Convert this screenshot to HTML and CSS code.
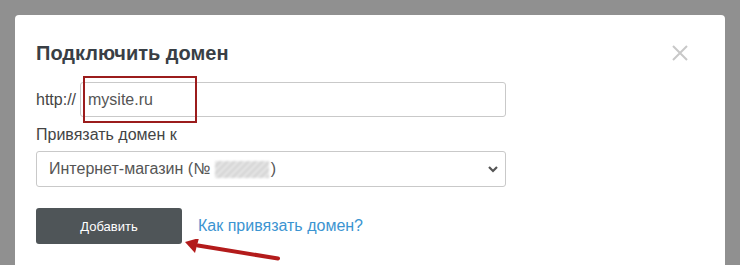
FILE: index.html
```html
<!DOCTYPE html>
<html lang="ru">
<head>
<meta charset="utf-8">
<link rel="stylesheet" href="styles.css">
</head>
<body>
<div class="modal">
  <div class="head">
    <h2 class="title">Подключить домен</h2>
    <span class="close" aria-label="close">
      <svg width="16" height="16" viewBox="0 0 16 16"><path d="M1 1L15 15M15 1L1 15" stroke="#c8c8c8" stroke-width="2" fill="none"/></svg>
    </span>
  </div>
  <div class="row-url">
    <span class="prefix">http://</span>
    <div class="input">mysite.ru<span class="highlight"></span></div>
  </div>
  <div class="label">Привязать домен к</div>
  <div class="select">
    <span class="sel-text">Интернет-магазин (№ <span class="blur"></span>)</span>
    <svg class="chev" width="10" height="7" viewBox="0 0 10 7"><path d="M1 1L5 5L9 1" stroke="#555" stroke-width="2.2" fill="none"/></svg>
  </div>
  <div class="actions">
    <button class="btn">Добавить</button>
    <a class="link" href="#">Как привязать домен?</a>
    <svg class="arrow" width="100" height="24" viewBox="0 0 100 24"><path d="M94 19.5L14 6.5" stroke="#b31b1b" stroke-width="4" stroke-linecap="round"/><path d="M1 3L15 -1L11 14Z" fill="#b31b1b"/></svg>
  </div>
</div>
</body>
</html>
```
FILE: styles.css
```css
html, body {
  margin: 0;
  padding: 0;
  height: 265px;
  overflow: hidden;
  background: #909090;
  font-family: "Liberation Sans", Arial, sans-serif;
}
.modal {
  margin: 15px 15px 0 15px;
  width: 710px;
  height: 250px;
  background: #fff;
  border-radius: 4px 4px 0 0;
  box-sizing: border-box;
  padding: 26px 21px 0 21px;
}
.head {
  display: flex;
  justify-content: space-between;
  align-items: flex-start;
}
.title {
  margin: 0;
  font-size: 20px;
  font-weight: bold;
  color: #393f45;
  line-height: 24px;
}
.close {
  margin: 4px 16px 0 0;
  display: block;
  line-height: 0;
}
.row-url {
  display: flex;
  align-items: center;
  margin-top: 17px;
}
.prefix {
  font-size: 16px;
  color: #444;
  width: 44px;
}
.input {
  position: relative;
  width: 426px;
  height: 35px;
  box-sizing: border-box;
  border: 1px solid #c9c9c9;
  border-radius: 3px;
  padding: 0 7px;
  display: flex;
  align-items: center;
  font-size: 16px;
  color: #555;
}
.highlight {
  position: absolute;
  left: 2px;
  top: -7px;
  width: 114px;
  height: 47px;
  box-sizing: border-box;
  border: 2px solid #9b1c1c;
}
.label {
  margin-top: 9px;
  font-size: 16px;
  color: #444;
  line-height: 18px;
}
.select {
  margin-top: 7px;
  width: 470px;
  height: 36px;
  box-sizing: border-box;
  border: 1px solid #c9c9c9;
  border-radius: 3px;
  display: flex;
  align-items: center;
  justify-content: space-between;
  padding: 0 7px 0 12px;
  font-size: 16px;
  color: #555;
}
.sel-text {
  display: flex;
  align-items: center;
  white-space: pre;
}
.blur {
  display: inline-block;
  width: 54px;
  height: 17px;
  background: repeating-linear-gradient(135deg, #e6e6e6 0 3px, #d2d2d2 3px 5px);
  filter: blur(1.2px);
  margin-right: 2px;
}
.actions {
  position: relative;
  display: flex;
  align-items: center;
  margin-top: 21px;
}
.btn {
  width: 146px;
  height: 36px;
  border: none;
  border-radius: 3px;
  background: #4f5558;
  color: #fff;
  font-family: inherit;
  font-size: 13px;
}
.link {
  margin-left: 16px;
  font-size: 16px;
  color: #3b94d1;
  text-decoration: none;
}
.arrow {
  position: absolute;
  left: 148px;
  top: 31px;
}
```
